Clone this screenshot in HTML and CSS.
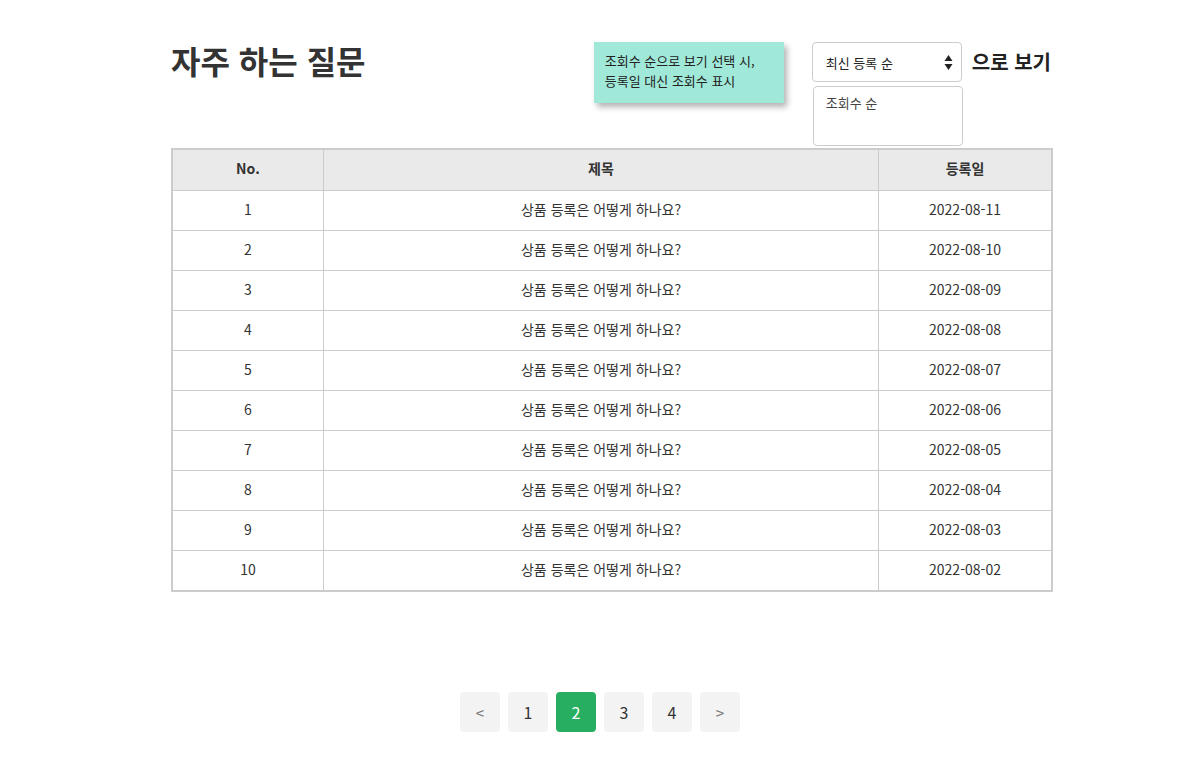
FILE: index.html
```html
<!DOCTYPE html>
<html lang="ko">
<head>
<meta charset="utf-8">
<title>자주 하는 질문</title>
<link rel="stylesheet" href="styles.css">
</head>
<body>
<div class="page">
  <div class="wrap">
    <div class="head">
      <h1 class="title">자주 하는 질문</h1>
      <div class="tip">조회수 순으로 보기 선택 시,<br>등록일 대신 조회수 표시</div>
      <div class="sort">
        <div class="sort-col">
          <div class="select">
            <span>최신 등록 순</span>
            <svg class="arrows" width="9" height="17" viewBox="0 0 9 17"><path d="M4.5 1 L8.5 7 H0.5 Z M4.5 16 L8.5 10 H0.5 Z" fill="#222"/></svg>
          </div>
          <div class="listbox"><span>조회수 순</span></div>
        </div>
        <div class="sort-label">으로 보기</div>
      </div>
    </div>
    <table class="faq">
      <colgroup><col class="c-no"><col class="c-title"><col class="c-date"></colgroup>
      <thead>
        <tr><th>No.</th><th>제목</th><th>등록일</th></tr>
      </thead>
      <tbody>
        <tr><td>1</td><td>상품 등록은 어떻게 하나요?</td><td>2022-08-11</td></tr>
        <tr><td>2</td><td>상품 등록은 어떻게 하나요?</td><td>2022-08-10</td></tr>
        <tr><td>3</td><td>상품 등록은 어떻게 하나요?</td><td>2022-08-09</td></tr>
        <tr><td>4</td><td>상품 등록은 어떻게 하나요?</td><td>2022-08-08</td></tr>
        <tr><td>5</td><td>상품 등록은 어떻게 하나요?</td><td>2022-08-07</td></tr>
        <tr><td>6</td><td>상품 등록은 어떻게 하나요?</td><td>2022-08-06</td></tr>
        <tr><td>7</td><td>상품 등록은 어떻게 하나요?</td><td>2022-08-05</td></tr>
        <tr><td>8</td><td>상품 등록은 어떻게 하나요?</td><td>2022-08-04</td></tr>
        <tr><td>9</td><td>상품 등록은 어떻게 하나요?</td><td>2022-08-03</td></tr>
        <tr><td>10</td><td>상품 등록은 어떻게 하나요?</td><td>2022-08-02</td></tr>
      </tbody>
    </table>
  </div>
  <nav class="pager">
    <a class="pg arrow">&lt;</a>
    <a class="pg">1</a>
    <a class="pg active">2</a>
    <a class="pg">3</a>
    <a class="pg">4</a>
    <a class="pg arrow">&gt;</a>
  </nav>
</div>
</body>
</html>
```

FILE: styles.css
```css
* { box-sizing: border-box; }
html, body { margin: 0; padding: 0; background: #fff; }
body {
  font-family: "Noto Sans CJK KR", "Noto Sans", sans-serif;
  color: #333;
}
.page { padding-top: 42px; }
.wrap { width: 882px; margin-left: 171px; }
.head { display: flex; align-items: flex-start; }
.title {
  margin: 0;
  font-size: 32px;
  line-height: 40px;
  font-weight: 700;
  color: #333;
  margin-top: -2px;
}
.tip {
  margin-left: auto;
  width: 190px;
  height: 61px;
  background: #a0e9d9;
  box-shadow: 3px 4px 6px rgba(0, 0, 0, 0.3);
  padding: 9px 11px;
  font-size: 13px;
  line-height: 20px;
  color: #222;
}
.sort { display: flex; align-items: flex-start; margin-left: 28px; margin-right: 2px; }
.sort-col { display: flex; flex-direction: column; width: 151px; }
.select {
  width: 150px;
  height: 40px;
  border: 1px solid #ccc;
  border-radius: 4px;
  display: flex;
  align-items: center;
  justify-content: space-between;
  padding: 0 8px 0 13px;
  font-size: 13px;
  color: #222;
}
.arrows { display: block; }
.listbox {
  margin-top: 4px;
  margin-left: 1px;
  width: 150px;
  height: 60px;
  border: 1px solid #ccc;
  border-radius: 4px;
  padding: 6px 12px;
  font-size: 13px;
  line-height: 20px;
  color: #444;
}
.sort-label {
  margin-left: 9px;
  font-size: 20px;
  font-weight: 700;
  line-height: 40px;
  color: #222;
}
.faq {
  margin-top: 2px;
  width: 882px;
  table-layout: fixed;
  border-collapse: separate;
  border-spacing: 0;
  border: 2px solid #ccc;
  font-size: 14px;
  color: #333;
}
.c-no { width: 151px; }
.c-date { width: 172px; }
.faq th, .faq td {
  border: 0;
  border-bottom: 1px solid #ccc;
  border-right: 1px solid #ccc;
  text-align: center;
  padding: 0 0 2px;
  line-height: 37px;
}
.faq th:last-child, .faq td:last-child { border-right: 0; }
.faq tbody tr:last-child td { border-bottom: 0; }
.faq th {
  background: #eaeaea;
  font-weight: 700;
  line-height: 36px;
  padding-bottom: 4px;
}
.pager {
  margin-top: 100px;
  display: flex;
  justify-content: center;
  gap: 8px;
}
.pg {
  width: 40px;
  height: 40px;
  border-radius: 4px;
  background: #f3f3f3;
  display: flex;
  align-items: center;
  justify-content: center;
  font-size: 16px;
  color: #333;
}
.pg.arrow { color: #777; font-size: 15px; }
.pg.active { background: #27ae60; color: #fff; }
```
